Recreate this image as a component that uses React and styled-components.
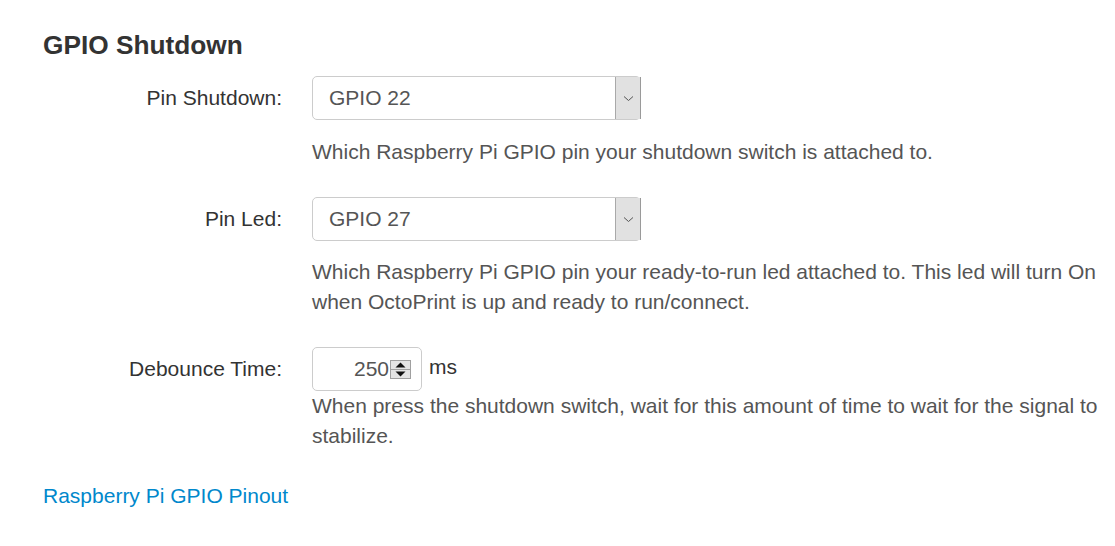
import React from "react";
import styled, { createGlobalStyle } from "styled-components";

const Global = createGlobalStyle`
  html, body { margin: 0; padding: 0; background: #fff; }
  body { font-family: "Liberation Sans", Arial, sans-serif; font-size: 21px; line-height: 30px; color: #333; }
`;

const Page = styled.div`
  padding: 30px 12px 0 43px;
`;

const Heading = styled.h4`
  margin: 0 0 16px;
  font-size: 26.25px;
  line-height: 30px;
  font-weight: bold;
  color: #333;
`;

const Group = styled.div`
  display: grid;
  grid-template-columns: 239px 1fr;
  column-gap: 30px;
  margin-bottom: 30px;
`;

const Label = styled.label`
  text-align: right;
  padding-top: 7px;
  color: #333;
`;

const Controls = styled.div`
  display: flex;
  flex-direction: column;
  align-items: flex-start;
`;

const SelectBox = styled.div`
  box-sizing: border-box;
  width: 329px;
  height: 44px;
  border: 1px solid #cccccc;
  border-radius: 5px;
  display: flex;
  align-items: stretch;
  background: #fff;
  margin-bottom: ${(p) => p.$mb}px;
`;

const SelectText = styled.div`
  flex: 1;
  padding-left: 16px;
  display: flex;
  align-items: center;
  color: #555;
`;

const ArrowBox = styled.div`
  width: 24px;
  background: #e1e1e1;
  border-left: 1px solid #a9a9a9;
  border-right: 1px solid #9a9a9a;
  margin-right: -1px;
  display: flex;
  align-items: center;
  justify-content: center;
`;

const Help = styled.div`
  color: #555;
`;

const Append = styled.div`
  display: flex;
  align-items: center;
  gap: 7px;
`;

const NumberBox = styled.div`
  box-sizing: border-box;
  width: 110px;
  height: 44px;
  border: 1px solid #cccccc;
  border-radius: 5px;
  display: flex;
  align-items: center;
  justify-content: flex-end;
  padding-right: 10px;
  color: #555;
`;

const Spinner = styled.div`
  width: 21px;
  height: 19px;
  box-sizing: border-box;
  border: 1px solid #a0a0a0;
  background: #e4e4e4;
  display: flex;
  flex-direction: column;
  margin-left: 1px;
`;

const SpinHalf = styled.div`
  flex: 1;
  display: flex;
  align-items: center;
  justify-content: center;
  & + & { border-top: 1px solid #a0a0a0; }
`;

const Unit = styled.span`
  color: #333;
  margin-top: -4px;
`;

const Link = styled.a`
  color: #0088cc;
  text-decoration: none;
  display: inline-block;
`;

const Chevron = () => (
  <svg width="11" height="7" viewBox="0 0 11 7">
    <path d="M1 1.5 L5.5 5.5 L10 1.5" fill="none" stroke="#555" strokeWidth="1" />
  </svg>
);

const Tri = ({ up }) => (
  <svg width="11" height="6" viewBox="0 0 11 6">
    <path d={up ? "M5.5 0.5 L10.5 5.5 L0.5 5.5 Z" : "M0.5 0.5 L10.5 0.5 L5.5 5.5 Z"} fill="#111" />
  </svg>
);

const Select = ({ value, mb }) => (
  <SelectBox $mb={mb}>
    <SelectText>{value}</SelectText>
    <ArrowBox>
      <Chevron />
    </ArrowBox>
  </SelectBox>
);

export default function App() {
  return (
    <>
      <Global />
      <Page>
        <Heading>GPIO Shutdown</Heading>
        <Group>
          <Label>Pin Shutdown:</Label>
          <Controls>
            <Select value="GPIO 22" mb={17} />
            <Help>Which Raspberry Pi GPIO pin your shutdown switch is attached to.</Help>
          </Controls>
        </Group>
        <Group>
          <Label>Pin Led:</Label>
          <Controls>
            <Select value="GPIO 27" mb={16} />
            <Help>
              Which Raspberry Pi GPIO pin your ready-to-run led attached to. This led will turn On when
              OctoPrint is up and ready to run/connect.
            </Help>
          </Controls>
        </Group>
        <Group>
          <Label>Debounce Time:</Label>
          <Controls>
            <Append>
              <NumberBox>
                250
                <Spinner>
                  <SpinHalf>
                    <Tri up />
                  </SpinHalf>
                  <SpinHalf>
                    <Tri />
                  </SpinHalf>
                </Spinner>
              </NumberBox>
              <Unit>ms</Unit>
            </Append>
            <Help>
              When press the shutdown switch, wait for this amount of time to wait for the signal to
              stabilize.
            </Help>
          </Controls>
        </Group>
        <Link href="#">Raspberry Pi GPIO Pinout</Link>
      </Page>
    </>
  );
}
